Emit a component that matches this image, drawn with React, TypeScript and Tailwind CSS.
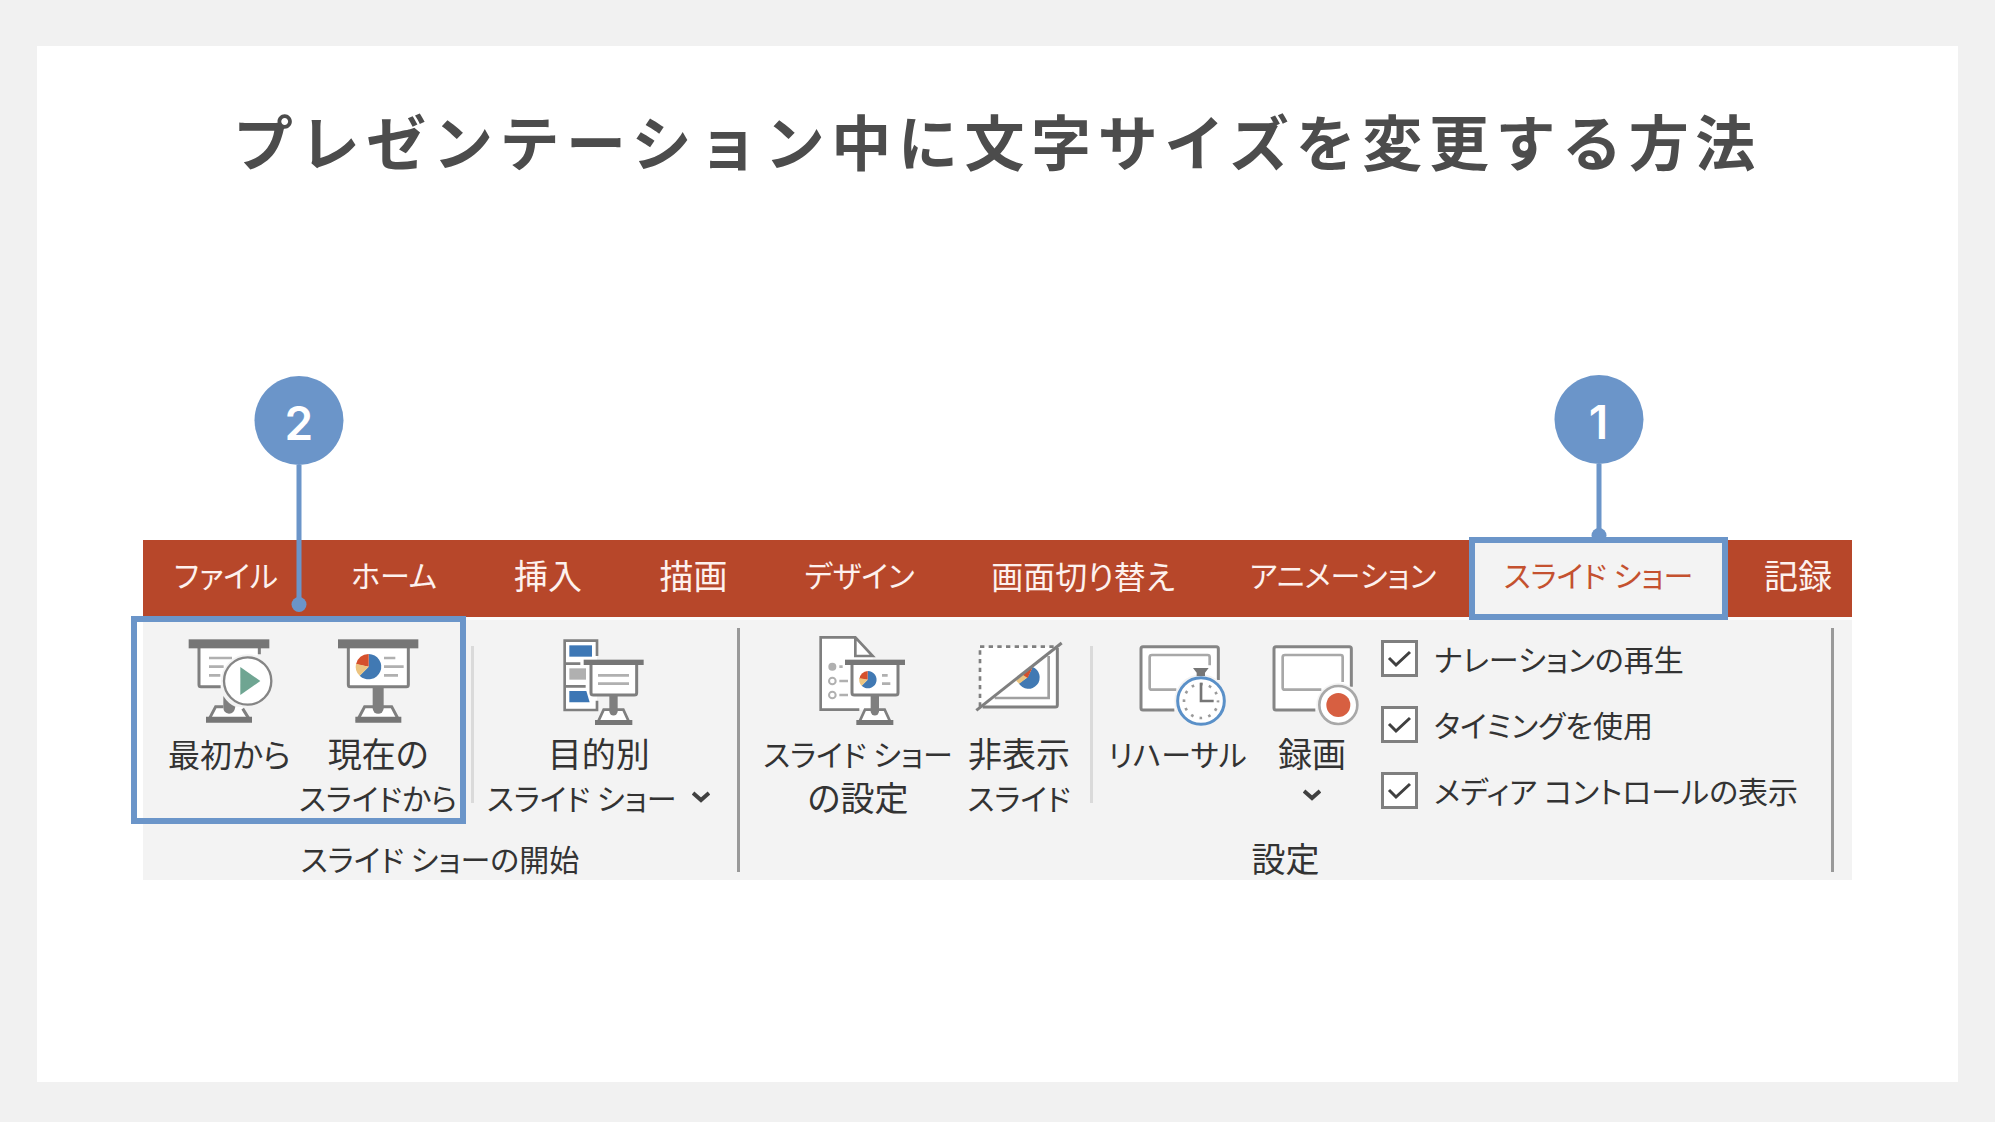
import React, { useState } from 'react';

interface IconProps {
    viewBox: string;
    children: React.ReactNode;
}

const IconFrame: React.FC<IconProps> = ({ viewBox, children }) => (
    <svg viewBox={viewBox} className="w-24 h-[92px] overflow-visible shrink-0" fill="none" aria-hidden="true">
        {children}
    </svg>
);

const FromStartIcon = () => (
    <IconFrame viewBox="183 345 288 276">
        <path d="M237 380V494Q237 500 243 500H312L418 400V380Z" fill="#fff" />
        <path d="M237 382V494Q237 500 243 500H302M418 382V403" stroke="#7f7f7f" strokeWidth="9" />
        <rect x="206" y="358" width="242" height="27" fill="#767676" />
        <path d="M267 414H336M267 440H311M267 466H301" stroke="#b0b0b0" strokeWidth="8" />
        <path d="M286 560L266 598H390L368 560Z" fill="#fff" />
        <path d="M310 560H287L267 598M368 566L388 598" stroke="#7f7f7f" strokeWidth="9" />
        <path d="M258 590H396V608H258Z" fill="#767676" />
        <circle cx="383" cy="483" r="80" fill="#f3f3f3" />
        <path d="M310 528Q325 552 346 560Q343 581 327 581Q310 580 310 562Z" fill="#7f7f7f" />
        <circle cx="383" cy="483" r="71" fill="#fff" stroke="#858585" strokeWidth="7" />
        <path d="M361 441V525L421 483Z" fill="#6fa592" />
    </IconFrame>
);

const FromCurrentIcon = () => (
    <IconFrame viewBox="627 345 288 276">
        <path d="M682 380V494Q682 500 688 500H856Q862 500 862 494V380" fill="#fff" stroke="#7f7f7f" strokeWidth="9" />
        <rect x="651" y="358" width="241" height="27" fill="#767676" />
        <path d="M789 414H823M789 440H848M789 466H831" stroke="#b0b0b0" strokeWidth="8" />
        <path d="M743 440V402A38 38 0 1 1 716 467Z" fill="#4179b3" />
        <path d="M743 440V402A38 38 0 0 0 705 433Z" fill="#d5502c" />
        <path d="M743 440L705 431A38 38 0 0 0 716 467Z" fill="#ecc480" />
        <path d="M731 560L711 598H832L812 560Z" fill="#fff" stroke="#7f7f7f" strokeWidth="9" />
        <path d="M703 590H841V608H703Z" fill="#767676" />
        <path d="M755 500H788V565A16 16 0 0 1 755 565Z" fill="#7f7f7f" />
    </IconFrame>
);

const CustomShowIcon = () => (
    <IconFrame viewBox="240 345 288 276">
        <rect x="281" y="362" width="97" height="208" fill="#fff" />
        <path d="M378 408V362H281V570H378V542M281 431H328M281 499H344" stroke="#7f7f7f" strokeWidth="8" />
        <rect x="295" y="376" width="68" height="34" fill="#3d77b5" />
        <rect x="295" y="445" width="50" height="34" fill="#b0b0b0" />
        <path d="M295 513H346L356 547H295Z" fill="#3d77b5" />
        <path d="M360 430V518Q360 525 367 525H490Q497 525 497 518V430" fill="#fff" stroke="#7f7f7f" strokeWidth="9" />
        <rect x="338" y="419" width="180" height="16" fill="#767676" />
        <path d="M381 466H474M381 491H474" stroke="#b0b0b0" strokeWidth="8" />
        <path d="M398 569L380 608H475L457 569Z" fill="#fff" stroke="#7f7f7f" strokeWidth="8" />
        <path d="M372 600H484V615H372Z" fill="#767676" />
        <path d="M415 525H440V574A12 12 0 0 1 415 574Z" fill="#7f7f7f" />
    </IconFrame>
);

const SetupShowIcon = () => (
    <IconFrame viewBox="150 345 288 276">
        <path d="M182 352H286L338 408V569H182Z" fill="#fff" />
        <path d="M298 569H182V352H286L338 408H286V352" stroke="#7f7f7f" strokeWidth="8" />
        <circle cx="217" cy="440" r="12" fill="#b0b0b0" />
        <circle cx="217" cy="483" r="10" stroke="#b0b0b0" strokeWidth="6" />
        <circle cx="217" cy="525" r="10" stroke="#b0b0b0" strokeWidth="6" />
        <path d="M238 440H248M238 483H264M238 525H264" stroke="#b0b0b0" strokeWidth="8" />
        <path d="M276 430V518Q276 525 283 525H407Q414 525 414 518V430" fill="#fff" stroke="#7f7f7f" strokeWidth="9" />
        <rect x="255" y="419" width="180" height="16" fill="#767676" />
        <path d="M323 479V453A26 26 0 1 1 305 497Z" fill="#4179b3" />
        <path d="M323 479V453A26 26 0 0 0 298 477Z" fill="#d5502c" />
        <path d="M323 479L298 474A26 26 0 0 0 305 497Z" fill="#ecc480" />
        <path d="M366 466H383M366 491H391" stroke="#b0b0b0" strokeWidth="8" />
        <path d="M315 569L297 608H392L374 569Z" fill="#fff" stroke="#7f7f7f" strokeWidth="8" />
        <path d="M289 600H400V615H289Z" fill="#767676" />
        <path d="M332 525H357V574A12 12 0 0 1 332 574Z" fill="#7f7f7f" />
    </IconFrame>
);

const HideSlideIcon = () => (
    <IconFrame viewBox="633 345 288 276">
        <path d="M660 380H892V560H660Z" fill="#fff" />
        <path d="M660 560V380" stroke="#7f7f7f" strokeWidth="8" strokeDasharray="13 13" />
        <path d="M660 380H890" stroke="#7f7f7f" strokeWidth="8" strokeDasharray="13 13" />
        <path d="M892 384V555Q892 561 886 561H668" stroke="#7f7f7f" strokeWidth="9" />
        <path d="M866 408V534H704" stroke="#a0a0a0" strokeWidth="8" />
        <path d="M818 441A34 34 0 1 1 776 490L803 472Z" fill="#4179b3" />
        <path d="M768 482L818 441L800 474L778 491Z" fill="#ecc480" />
        <path d="M788 464L818 441L803 474Z" fill="#d5502c" />
        <path d="M649 571L905 369" stroke="#7f7f7f" strokeWidth="9" />
    </IconFrame>
);

const RehearseIcon = () => (
    <IconFrame viewBox="147 345 288 276">
        <rect x="180" y="380" width="232" height="190" rx="4" fill="#fff" />
        <path d="M280 570H186Q180 570 180 564V386Q180 380 186 380H406Q412 380 412 386V480" stroke="#858585" strokeWidth="9" />
        <path d="M286 509H213Q206 509 206 503V411Q206 405 213 405H380Q386 405 386 411V436" stroke="#a8a8a8" strokeWidth="8" />
        <circle cx="360" cy="543" r="80" fill="#f3f3f3" />
        <path d="M336 444H383L372 458V468H347V458Z" fill="#767676" />
        <circle cx="360" cy="543" r="70" fill="#fff" stroke="#5a90c8" strokeWidth="9" />
        <circle cx="360" cy="543" r="51" stroke="#9a9a9a" strokeWidth="8" strokeDasharray="8 18.7" strokeDashoffset="4" />
        <path d="M360 488V543H398" stroke="#767676" strokeWidth="8" />
    </IconFrame>
);

const RecordIcon = () => (
    <IconFrame viewBox="552 345 288 276">
        <rect x="582" y="380" width="232" height="190" rx="4" fill="#fff" />
        <path d="M706 570H588Q582 570 582 564V386Q582 380 588 380H808Q814 380 814 386V500" stroke="#858585" strokeWidth="9" />
        <path d="M724 509H615Q608 509 608 503V411Q608 405 615 405H782Q788 405 788 411V486" stroke="#a8a8a8" strokeWidth="8" />
        <circle cx="775" cy="555" r="66" fill="#f3f3f3" />
        <circle cx="775" cy="555" r="57" fill="#fff" stroke="#a8a8a8" strokeWidth="8" />
        <circle cx="775" cy="555" r="36" fill="#d75f41" />
    </IconFrame>
);

const Chevron = () => (
    <svg viewBox="0 0 18 12" className="w-[18px] h-3" fill="none" aria-hidden="true">
        <path d="M1 2L9 9L17 2" stroke="#404040" strokeWidth="4" />
    </svg>
);

// Numbered marker with a stem that ends in a dot
const Pin: React.FC<{ label: string; stem: string; className: string }> = ({ label, stem, className }) => (
    <div className={`absolute left-1/2 -translate-x-1/2 z-10 flex flex-col items-center ${className}`}>
        <span className="w-[89px] h-[89px] pt-1 rounded-full bg-[#6b95c9] text-white text-[46px] leading-none font-semibold font-[Inter,sans-serif] flex items-center justify-center">
            {label}
        </span>
        <span className={`w-[5px] bg-[#6b95c9] ${stem}`} />
        <span className="w-[15px] h-[15px] -mt-1 rounded-full bg-[#6b95c9]" />
    </div>
);

interface CommandProps {
    icon: React.ReactNode;
    children: React.ReactNode;
}

const Command: React.FC<CommandProps> = ({ icon, children }) => (
    <button className="min-w-0 flex flex-col items-center justify-start whitespace-nowrap leading-[44px]">
        {icon}
        <span className="mt-1 flex flex-col items-center">{children}</span>
    </button>
);

const tabs = [
    { name: 'ファイル', size: 'text-[30px]' },
    { name: 'ホーム', size: 'text-[30px]' },
    { name: '挿入', size: 'text-[34px]' },
    { name: '描画', size: 'text-[34px]' },
    { name: 'デザイン', size: 'text-[30px]' },
    { name: '画面切り替え', size: 'text-[32px]' },
    { name: 'アニメーション', size: 'text-[30px]' },
    { name: 'スライド ショー', size: 'text-[30px]' },
    { name: '記録', size: 'text-[34px] pl-4' },
];

const options = ['ナレーションの再生', 'タイミングを使用', 'メディア コントロールの表示'];

const OptionCheckbox: React.FC<{ label: string }> = ({ label }) => {
    const [checked, setChecked] = useState(true);

    return (
        <label className="flex items-center gap-4 h-[38px] whitespace-nowrap">
            <span className="grid shrink-0">
                <input
                    type="checkbox"
                    checked={checked}
                    onChange={() => setChecked(!checked)}
                    className="col-start-1 row-start-1 appearance-none w-[37px] h-[37px] bg-white border-3 border-[#7f7f7f]"
                />
                {checked && (
                    <svg viewBox="0 0 37 37" className="col-start-1 row-start-1 w-[37px] h-[37px] pointer-events-none" fill="none">
                        <path d="M8 18L15 25L29 12" stroke="#404040" strokeWidth="3" />
                    </svg>
                )}
            </span>
            <span className="text-[30px]">{label}</span>
        </label>
    );
};

const App = () => {
    const [active, setActive] = useState('スライド ショー');

    return (
        <main className="min-h-screen bg-[#f1f1f1] px-[37px] pt-[46px] pb-10 flex flex-col font-['Noto_Sans_CJK_JP',sans-serif]">
            <div className="flex-1 bg-white px-[106px] pt-16">
                <h1 className="text-center text-6xl leading-[60px] font-bold tracking-[0.11em] text-[#4c4c4c] whitespace-nowrap">
                    プレゼンテーション中に文字サイズを変更する方法
                </h1>

                <section className="mt-[370px] text-[34px] text-[#333] [font-feature-settings:'palt']">
                    <div role="tablist" className="grid grid-cols-[166fr_170fr_138fr_153fr_179fr_268fr_252fr_259fr_124fr] h-[77px] bg-[#b7472a]">
                        {tabs.map(({ name, size }) => (
                            <div key={name} className="relative min-w-0">
                                <button
                                    role="tab"
                                    aria-selected={name === active}
                                    onClick={() => setActive(name)}
                                    className={`w-full h-full pb-2 flex items-center justify-center whitespace-nowrap ${size} ${name === active ? 'bg-[#f3f3f3] text-[#c4512f]' : 'text-[#fdf1ee]'}`}
                                >
                                    {name}
                                </button>
                                {name === 'スライド ショー' && (
                                    <div className="absolute inset-x-0 -inset-y-[3px] z-10 border-6 border-[#6b95c9] pointer-events-none">
                                        <Pin label="1" stem="h-[68px]" className="bottom-0 mb-[71px]" />
                                    </div>
                                )}
                            </div>
                        ))}
                    </div>

                    <div className="border-t-3 border-[#fbfbfb] bg-[#f3f3f3] grid grid-cols-[597fr_1112fr] h-[263px]">
                        <div className="min-w-0 py-2 flex">
                            <div className="min-w-0 flex-1 flex flex-col">
                                <div className="flex-1 grid grid-cols-[318fr_11fr_3px_249fr_14fr] pt-[7px]">
                                    <div className="relative min-w-0 grid grid-cols-2 pl-3 pr-2">
                                        <Command icon={<FromStartIcon />}>
                                            <span className="text-[32px]">最初から</span>
                                        </Command>
                                        <Command icon={<FromCurrentIcon />}>
                                            <span>現在の</span>
                                            <span className="text-[30px]">スライドから</span>
                                        </Command>
                                        <div className="absolute -left-3 -right-1.5 -top-[19px] h-[208px] z-10 border-6 border-[#6b95c9] pointer-events-none">
                                            <Pin label="2" stem="h-[136px]" className="bottom-full mb-2.5" />
                                        </div>
                                    </div>
                                    <div />
                                    <div className="bg-[#dadada] mt-[11px] h-[157px]" />
                                    <Command icon={<CustomShowIcon />}>
                                        <span>目的別</span>
                                        <span className="text-[30px] flex items-center gap-4">
                                            スライド ショー
                                            <Chevron />
                                        </span>
                                    </Command>
                                    <div />
                                </div>
                                <h2 className="text-center text-[30px] leading-7">スライド ショーの開始</h2>
                            </div>
                            <div className="w-[3px] bg-[#999]" />
                        </div>

                        <div className="min-w-0 py-2 pr-[18px] flex">
                            <div className="min-w-0 flex-1 flex flex-col">
                                <div className="flex-1 grid grid-cols-[28fr_180fr_142fr_3px_169fr_100fr_469fr] pt-[7px]">
                                    <div />
                                    <Command icon={<SetupShowIcon />}>
                                        <span className="text-[30px]">スライド ショー</span>
                                        <span>の設定</span>
                                    </Command>
                                    <Command icon={<HideSlideIcon />}>
                                        <span>非表示</span>
                                        <span className="text-[30px]">スライド</span>
                                    </Command>
                                    <div className="bg-[#dadada] mt-[11px] h-[157px]" />
                                    <Command icon={<RehearseIcon />}>
                                        <span className="text-[30px]">リハーサル</span>
                                    </Command>
                                    <Command icon={<RecordIcon />}>
                                        <span>録画</span>
                                        <span className="h-10 flex items-center"><Chevron /></span>
                                    </Command>
                                    <div className="min-w-0 pl-[19px] pt-1 flex flex-col gap-7">
                                        {options.map((option) => (
                                            <OptionCheckbox key={option} label={option} />
                                        ))}
                                    </div>
                                </div>
                                <h2 className="text-center leading-7">設定</h2>
                            </div>
                            <div className="w-[3px] bg-[#999]" />
                        </div>
                    </div>
                </section>
            </div>
        </main>
    );
};

export default App;
